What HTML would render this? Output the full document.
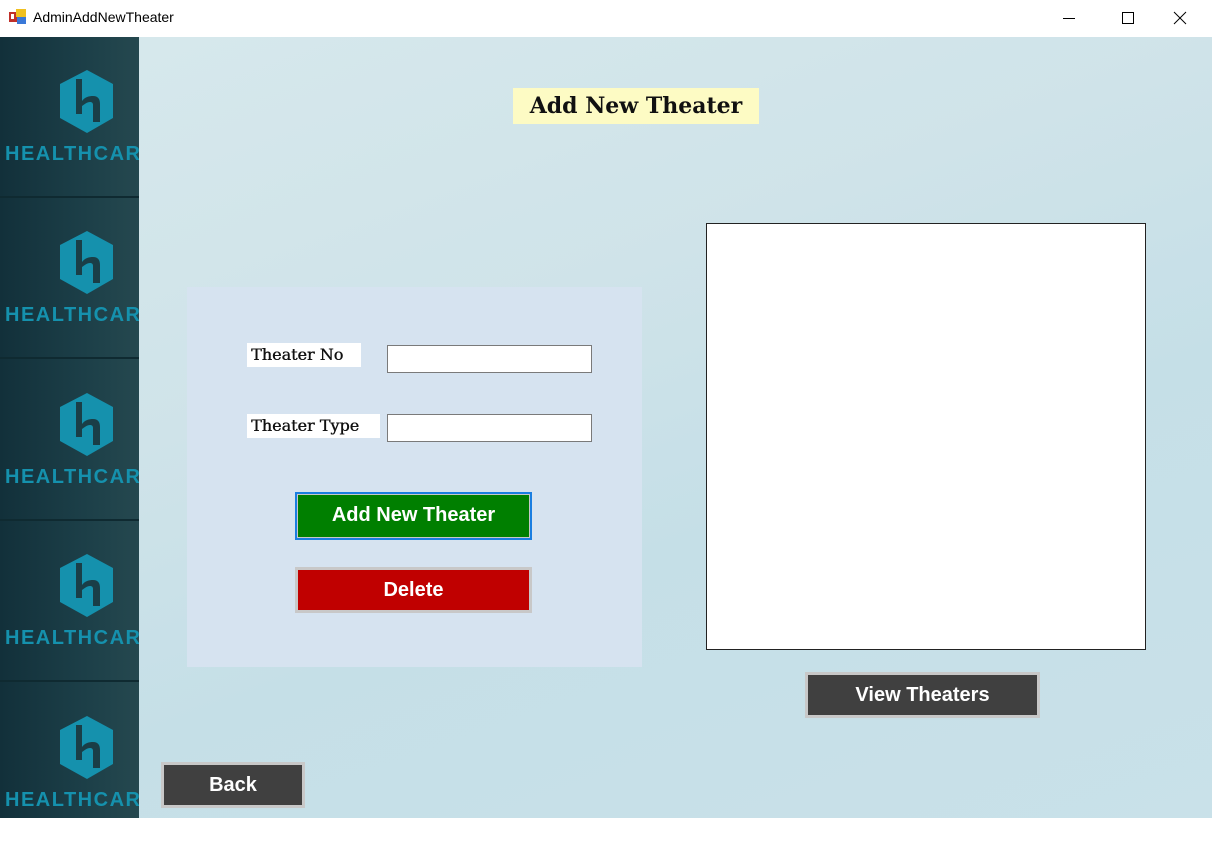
<!DOCTYPE html>
<html><head><meta charset="utf-8"><style>
*{margin:0;padding:0;box-sizing:border-box}
body{width:1212px;height:818px;overflow:hidden;position:relative;font-family:"Liberation Sans",sans-serif;background:#fff}
.tb{position:absolute;left:0;top:0;width:1212px;height:37px;background:#fff}
.tb .t{position:absolute;left:33px;top:9px;font-size:14px;color:#000;font-family:"Liberation Sans",sans-serif}
.main{position:absolute;left:139px;top:37px;width:1073px;height:781px;background:linear-gradient(160deg,#d6e8ec 0%,#cfe3e9 35%,#c5dfe7 60%,#c9e1e9 100%)}
.side{position:absolute;left:0;top:37px;width:139px;height:781px;background:linear-gradient(90deg,#12303a 0%,#1c3f48 60%,#25484f 100%)}
.tile{position:absolute;left:0;width:139px;height:161px;border-bottom:2px solid #0f2a31}
.tile .ht{position:absolute;left:5px;top:106px;font-size:20px;font-weight:bold;color:#1591ad;letter-spacing:1.5px;white-space:nowrap;overflow:hidden;width:134px}
.title{position:absolute;left:513px;top:88px;width:246px;height:36px;background:#fdfbc4;font-family:"DejaVu Serif","Liberation Serif",serif;font-size:22px;font-weight:bold;line-height:36px;text-align:center;color:#111}
.panel{position:absolute;left:187px;top:287px;width:455px;height:380px;background:#d6e3f0}
.lbl{position:absolute;background:#fff;font-family:"DejaVu Serif","Liberation Serif",serif;font-size:16px;color:#111;height:24px;line-height:24px;padding-left:4px;text-shadow:0.4px 0 0 #111}
.inp{position:absolute;background:#fff;border:1px solid #7a7a7a}
.btn{position:absolute;color:#fff;font-weight:bold;text-align:center;font-size:20px}
.list{position:absolute;left:706px;top:223px;width:440px;height:427px;background:#fff;border:1px solid #222}
</style></head><body>
<div class="tb">
<svg style="position:absolute;left:9px;top:9px" width="18" height="16"><rect x="0" y="3" width="8" height="10" fill="#c0302a"/><rect x="7" y="0" width="10" height="8" fill="#f0c020"/><rect x="8" y="8" width="9" height="7" fill="#3a78d8"/><rect x="2" y="5" width="3" height="5" fill="#fff"/></svg>
<div class="t">AdminAddNewTheater</div>
<svg style="position:absolute;left:1060px;top:8px" width="140" height="20" stroke="#000" stroke-width="1" fill="none"><line x1="3" y1="10.5" x2="15" y2="10.5"/><rect x="62.5" y="4.5" width="11" height="11"/><line x1="114" y1="4" x2="126" y2="16"/><line x1="126" y1="4" x2="114" y2="16"/></svg>
</div>
<div class="side">
<div class="tile" style="top:0"><svg style="position:absolute;left:0;top:0" width="139" height="110"><polygon points="87,33 113,47 113,81 87,96 60,81 60,47" fill="#1591ad"/><path d="M76 42h6v22c3-4 7-5 11-5 5 0 7 3 7 8v18h-7V68c0-2-1-3-3-3-3 0-5 2-8 4v8h-6z" fill="#1a3e47"/></svg><div class="ht">HEALTHCARE</div></div>
<div class="tile" style="top:161px"><svg style="position:absolute;left:0;top:0" width="139" height="110"><polygon points="87,33 113,47 113,81 87,96 60,81 60,47" fill="#1591ad"/><path d="M76 42h6v22c3-4 7-5 11-5 5 0 7 3 7 8v18h-7V68c0-2-1-3-3-3-3 0-5 2-8 4v8h-6z" fill="#1a3e47"/></svg><div class="ht">HEALTHCARE</div></div>
<div class="tile" style="top:323px"><svg style="position:absolute;left:0;top:0" width="139" height="110"><polygon points="87,33 113,47 113,81 87,96 60,81 60,47" fill="#1591ad"/><path d="M76 42h6v22c3-4 7-5 11-5 5 0 7 3 7 8v18h-7V68c0-2-1-3-3-3-3 0-5 2-8 4v8h-6z" fill="#1a3e47"/></svg><div class="ht">HEALTHCARE</div></div>
<div class="tile" style="top:484px"><svg style="position:absolute;left:0;top:0" width="139" height="110"><polygon points="87,33 113,47 113,81 87,96 60,81 60,47" fill="#1591ad"/><path d="M76 42h6v22c3-4 7-5 11-5 5 0 7 3 7 8v18h-7V68c0-2-1-3-3-3-3 0-5 2-8 4v8h-6z" fill="#1a3e47"/></svg><div class="ht">HEALTHCARE</div></div>
<div class="tile" style="top:646px;border:none"><svg style="position:absolute;left:0;top:0" width="139" height="110"><polygon points="87,33 113,47 113,81 87,96 60,81 60,47" fill="#1591ad"/><path d="M76 42h6v22c3-4 7-5 11-5 5 0 7 3 7 8v18h-7V68c0-2-1-3-3-3-3 0-5 2-8 4v8h-6z" fill="#1a3e47"/></svg><div class="ht">HEALTHCARE</div></div>
</div>
<div class="main"></div>
<div class="title">Add New Theater</div>
<div class="panel"></div>
<div class="lbl" style="left:247px;top:343px;width:114px">Theater No</div>
<div class="inp" style="left:387px;top:345px;width:205px;height:28px"></div>
<div class="lbl" style="left:247px;top:414px;width:133px">Theater Type</div>
<div class="inp" style="left:387px;top:414px;width:205px;height:28px"></div>
<div class="btn" style="left:295px;top:492px;width:237px;height:48px;border:2px solid #1a7ee0;background:#007f00;box-shadow:inset 0 0 0 1px #c8c8c8;line-height:43px">Add New Theater</div>
<div class="btn" style="left:295px;top:567px;width:237px;height:46px;border:3px solid #c8c8c8;background:#c00000;line-height:40px">Delete</div>
<div class="list"></div>
<div class="btn" style="left:805px;top:672px;width:235px;height:46px;border:3px solid #c8c8c8;background:#404040;line-height:40px">View Theaters</div>
<div class="btn" style="left:161px;top:762px;width:144px;height:46px;border:3px solid #c8c8c8;background:#404040;line-height:40px">Back</div>
</body></html>
